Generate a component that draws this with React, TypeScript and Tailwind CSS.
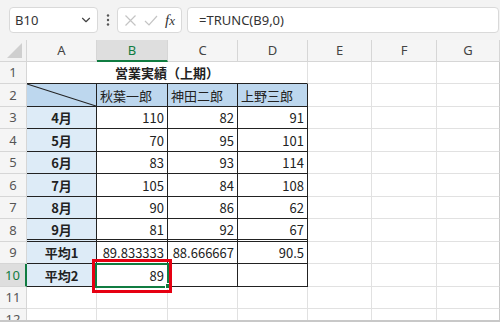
import { ChevronDown } from "lucide-react";

const rows = [
  { n: 3, h: "h-[22px]", label: "4月", v: ["110", "82", "91"] },
  { n: 4, h: "h-[23px]", label: "5月", v: ["70", "95", "101"] },
  { n: 5, h: "h-[22px]", label: "6月", v: ["83", "93", "114"] },
  { n: 6, h: "h-[23px]", label: "7月", v: ["105", "84", "108"] },
  { n: 7, h: "h-[22px]", label: "8月", v: ["90", "86", "62"] },
  { n: 8, h: "h-[23px]", label: "9月", v: ["81", "92", "67"] },
];

function RowHead({ n, active }: { n: number; active?: boolean }) {
  return (
    <div
      className={`w-[27px] shrink-0 h-full flex items-center justify-center border-b border-[#d6d6d6] font-['Noto_Sans',sans-serif] text-[13px] ${
        active ? "bg-[#dedede] text-[#107c41] border-r-2 border-r-[#107c41]" : "bg-[#f5f5f5] text-[#555] border-r border-r-[#d6d6d6]"
      }`}
    >
      {n}
    </div>
  );
}

function EmptyCells() {
  return (
    <>
      <div className="w-[64px] h-full border-r border-b border-[#e1e1e1]" />
      <div className="w-[65px] h-full border-r border-b border-[#e1e1e1]" />
      <div className="w-[63px] h-full border-r border-b border-[#e1e1e1] border-r-[#c8c8c8]" />
    </>
  );
}

function Toolbar() {
  return (
    <div className="h-[40px] bg-[#f3f3f3] flex items-center font-['Noto_Sans',sans-serif] text-[13px] text-[#333]">
      <div className="ml-[9px] w-[89px] h-[26px] bg-white border border-[#d9d9d9] rounded-[4px] flex items-center justify-between pl-[5px] pr-[4px]">
        <span>B10</span>
        <ChevronDown size={14} strokeWidth={2} className="text-[#444]" />
      </div>
      <div className="w-[19px] flex justify-center">
        <svg width="4" height="14" viewBox="0 0 4 14">
          <circle cx="2" cy="2.5" r="1.2" fill="#555" />
          <circle cx="2" cy="7" r="1.2" fill="#555" />
          <circle cx="2" cy="11.5" r="1.2" fill="#555" />
        </svg>
      </div>
      <div className="w-[65px] h-[26px] bg-white border border-[#d9d9d9] rounded-[4px] flex items-center pl-[6px] gap-[7px]">
        <svg width="13" height="13" viewBox="0 0 13 13">
          <path d="M1.5 1.5 L11.5 11.5 M11.5 1.5 L1.5 11.5" stroke="#c4c4c4" strokeWidth="1.2" fill="none" />
        </svg>
        <svg width="14" height="13" viewBox="0 0 14 13">
          <path d="M1 7 L5 11 L13 2" stroke="#c4c4c4" strokeWidth="1.2" fill="none" />
        </svg>
        <span className="font-['Liberation_Serif',serif] italic text-[15px] text-[#333] leading-none">
          f<span className="text-[13px]">x</span>
        </span>
      </div>
      <div className="ml-[5px] flex-1 mr-[1px] h-[26px] bg-white border border-[#d9d9d9] rounded-[4px] flex items-center pl-[11px]">
        =TRUNC(B9,0)
      </div>
    </div>
  );
}

function ColumnHeaders() {
  const cols = [
    { l: "A", w: "w-[70px]" },
    { l: "B", w: "w-[71px]", active: true },
    { l: "C", w: "w-[70px]" },
    { l: "D", w: "w-[70px]" },
    { l: "E", w: "w-[64px]" },
    { l: "F", w: "w-[65px]" },
    { l: "G", w: "w-[63px]" },
  ];
  return (
    <div className="h-[22px] flex font-['Noto_Sans',sans-serif] text-[13px]">
      <div className="w-[27px] h-full bg-[#f3f3f3] border-r border-b border-[#d6d6d6] flex items-end justify-end">
        <svg width="26" height="21" viewBox="0 0 26 21">
          <polygon points="22,3 22,18 7,18" fill="#cfcfcf" />
        </svg>
      </div>
      {cols.map((c) => (
        <div
          key={c.l}
          className={`${c.w} h-full flex items-center justify-center border-r border-[#d6d6d6] ${
            c.active ? "bg-[#dedede] text-[#107c41] border-b-2 border-b-[#107c41]" : "bg-[#f5f5f5] text-[#444] border-b border-b-[#d6d6d6]"
          }`}
        >
          {c.l}
        </div>
      ))}
    </div>
  );
}

export default function App() {
  return (
    <div className="w-[500px] h-[322px] overflow-hidden bg-white font-['Noto_Sans_CJK_JP',sans-serif] text-[13px] text-[#222] leading-none border-b-2 border-[#c8c8c8]">
      <Toolbar />
      <ColumnHeaders />

      {/* row 1: title */}
      <div className="h-[22px] flex">
        <RowHead n={1} />
        <div className="w-[281px] h-full flex items-center justify-center font-bold border-r border-r-[#e1e1e1] border-b border-b-[#222]">
          営業実績（上期）
        </div>
        <EmptyCells />
      </div>

      {/* row 2: names */}
      <div className="h-[23px] flex">
        <RowHead n={2} />
        <div className="relative w-[70px] h-full bg-[#bdd7ee] border-r border-b border-[#222]">
          <svg className="absolute inset-0" width="69" height="22" viewBox="0 0 69 22">
            <line x1="0" y1="0" x2="69" y2="22" stroke="#222" strokeWidth="1.1" />
          </svg>
        </div>
        <div className="w-[71px] h-full bg-[#bdd7ee] border-r border-b border-[#222] flex items-center pl-[3px]">秋葉一郎</div>
        <div className="w-[70px] h-full bg-[#bdd7ee] border-r border-b border-[#222] flex items-center pl-[3px]">神田二郎</div>
        <div className="w-[70px] h-full bg-[#bdd7ee] border-r border-b border-[#222] flex items-center pl-[3px]">上野三郎</div>
        <EmptyCells />
      </div>

      {rows.map((r) => (
        <div key={r.n} className={`${r.h} flex`}>
          <RowHead n={r.n} />
          <div
            className={`w-[70px] h-full bg-[#ddebf7] border-r border-[#222] flex items-center justify-center font-bold ${
              r.n === 8 ? "border-b-[3px] border-double" : "border-b"
            }`}
          >
            {r.label}
          </div>
          {r.v.map((v, i) => (
            <div
              key={i}
              className={`${i === 0 ? "w-[71px]" : "w-[70px]"} h-full border-r border-[#222] flex items-center justify-end pr-[3px] ${
                r.n === 8 ? "border-b-[3px] border-double" : "border-b"
              }`}
            >
              {v}
            </div>
          ))}
          <EmptyCells />
        </div>
      ))}

      {/* row 9 */}
      <div className="h-[22px] flex">
        <RowHead n={9} />
        <div className="w-[70px] h-full bg-[#ddebf7] border-r border-b border-[#222] flex items-center justify-center font-bold">平均1</div>
        <div className="w-[71px] h-full border-r border-b border-[#222] flex items-center justify-end pr-[3px]">89.833333</div>
        <div className="w-[70px] h-full border-r border-b border-[#222] flex items-center justify-end pr-[3px]">88.666667</div>
        <div className="w-[70px] h-full border-r border-b border-[#222] flex items-center justify-end pr-[3px]">90.5</div>
        <EmptyCells />
      </div>

      {/* row 10 */}
      <div className="h-[23px] flex">
        <RowHead n={10} active />
        <div className="w-[70px] h-full bg-[#ddebf7] border-r border-b border-[#222] flex items-center justify-center font-bold">平均2</div>
        <div className="relative w-[71px] h-full border-r border-b border-[#222] flex items-center justify-end pr-[3px]">
          89
          <div className="absolute left-[-2px] top-[-1px] w-[74px] h-[25px] border-2 border-[#107c41]" />
          <div className="absolute left-[68px] top-[19px] w-[6px] h-[6px] bg-[#107c41] border border-white" />
          <div className="absolute left-[-5px] top-[-5px] w-[80px] h-[34px] border-[3px] border-[#e60012]" />
        </div>
        <div className="w-[70px] h-full border-r border-b border-[#222]" />
        <div className="w-[70px] h-full border-r border-b border-[#222]" />
        <EmptyCells />
      </div>

      {[11, 12].map((n) => (
        <div key={n} className="h-[22px] flex">
          <RowHead n={n} />
          <div className="w-[70px] h-full border-r border-b border-[#e1e1e1]" />
          <div className="w-[71px] h-full border-r border-b border-[#e1e1e1]" />
          <div className="w-[70px] h-full border-r border-b border-[#e1e1e1]" />
          <div className="w-[70px] h-full border-r border-b border-[#e1e1e1]" />
          <EmptyCells />
        </div>
      ))}
    </div>
  );
}
